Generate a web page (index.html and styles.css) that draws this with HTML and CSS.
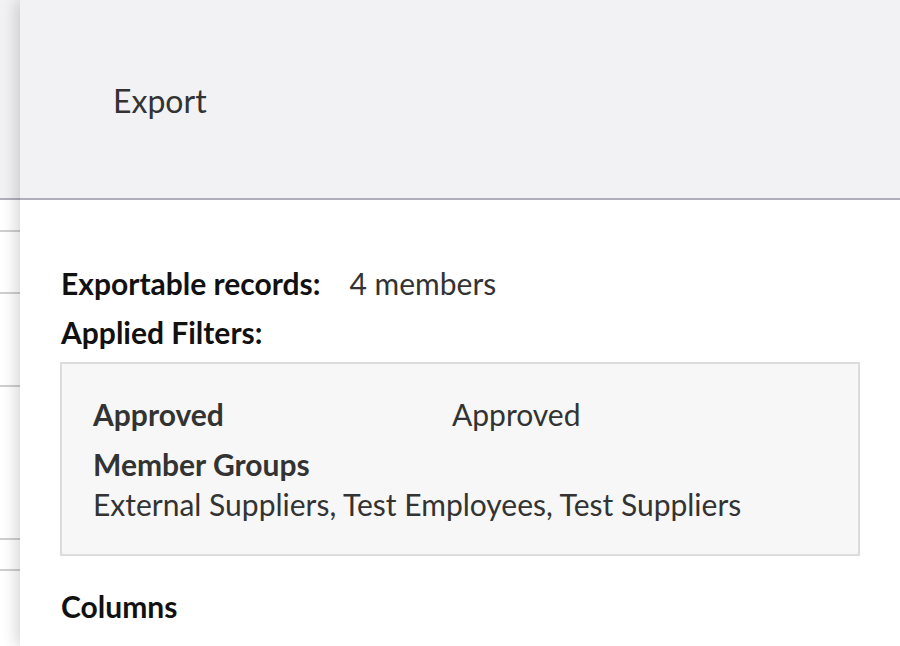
FILE: index.html
```html
<!DOCTYPE html>
<html lang="en">
<head>
<meta charset="utf-8">
<title>Export</title>
<link rel="stylesheet" href="styles.css">
</head>
<body>
<div class="page">
  <div class="backdrop">
    <div class="bg-head"></div>
    <div class="bg-row r1"></div>
    <div class="bg-row r2"></div>
    <div class="bg-row r3"></div>
    <div class="bg-row r4"></div>
    <div class="bg-row r5"></div>
    <div class="bg-row r6"></div>
  </div>
  <aside class="drawer">
    <header class="drawer-head">
      <h1 class="drawer-title">Export</h1>
    </header>
    <section class="drawer-body">
      <div class="line">
        <span class="label">Exportable records:</span>
        <span class="value">4 members</span>
      </div>
      <div class="line line-filters">
        <span class="label">Applied Filters:</span>
      </div>
      <div class="filters">
        <div class="filter-row">
          <span class="f-label f-col">Approved</span>
          <span class="f-value">Approved</span>
        </div>
        <div class="filter-block">
          <span class="f-label">Member Groups</span>
          <span class="f-value">External Suppliers, Test Employees, Test Suppliers</span>
        </div>
      </div>
      <h2 class="section-title">Columns</h2>
    </section>
  </aside>
</div>
</body>
</html>
```
FILE: styles.css
```css
* { box-sizing: border-box; }
html, body { margin: 0; padding: 0; }
body {
  font-family: Lato, "Noto Sans", "Liberation Sans", sans-serif;
  background: #ffffff;
}
.page {
  position: relative;
  width: 900px;
  height: 646px;
  overflow: hidden;
}
.backdrop {
  display: flex;
  flex-direction: column;
  height: 646px;
}
.bg-head {
  height: 200px;
  background: #f2f2f4;
  border-bottom: 2px solid #b0aeb8;
}
.bg-row {
  background: #ffffff;
  border-bottom: 2px solid #cfcfcf;
}
.r1 { height: 32px; }
.r2 { height: 62px; }
.r3 { height: 93px; }
.r4 { height: 153px; }
.r5 { height: 31px; }
.r6 { flex: 1; border-bottom: 0; }

.drawer {
  position: absolute;
  top: 0;
  left: 20px;
  right: 0;
  bottom: 0;
  background: #ffffff;
  box-shadow: -4px 0 14px rgba(0, 0, 0, 0.16);
  display: flex;
  flex-direction: column;
}
.drawer-head {
  height: 200px;
  background: #f2f2f4;
  border-bottom: 2px solid #b0aeb8;
  padding: 83px 0 0 93px;
}
.drawer-title {
  margin: 0;
  font-size: 32px;
  font-weight: 400;
  color: #333333;
  line-height: 36px;
}
.drawer-body {
  padding: 65px 40px 0 40px;
  display: flex;
  flex-direction: column;
}
.line {
  display: flex;
  align-items: baseline;
  font-size: 30px;
  line-height: 36px;
  margin-bottom: 13px;
}
.line-filters { margin-bottom: 12px; }
.label {
  font-weight: 700;
  color: #111111;
  margin-left: 1px;
}
.value {
  color: #333333;
  margin-left: 29px;
}
.filters {
  background: #f7f7f7;
  border: 2px solid #dcdcdc;
  padding: 32px 30px 32px 31px;
  display: flex;
  flex-direction: column;
  gap: 14px;
  font-size: 30px;
  line-height: 36px;
}
.filter-row {
  display: flex;
  align-items: baseline;
}
.filter-block {
  display: flex;
  flex-direction: column;
  gap: 4px;
}
.f-label {
  font-weight: 700;
  color: #333333;
}
.f-col { width: 359px; flex: none; }
.f-value { color: #333333; }
.section-title {
  margin: 32px 0 0 1px;
  font-size: 30px;
  line-height: 36px;
  font-weight: 700;
  color: #111111;
}
```
